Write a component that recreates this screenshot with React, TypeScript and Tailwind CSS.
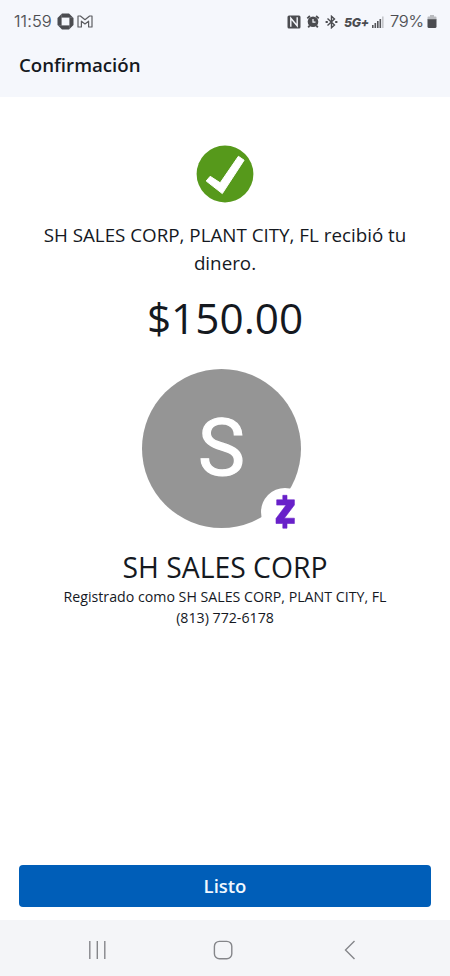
function StatusBar() {
  return (
    <div className="flex h-[43px] items-center justify-between pl-[14px] pr-[13px] text-[#4b4c50] font-['Inter','Roboto',sans-serif]">
      <div className="flex items-center">
        <span className="w-[38px] whitespace-nowrap text-[16.5px] font-light leading-none tracking-[0.1px] [-webkit-text-stroke:0.15px_#4b4c50]">11:59</span>
        <svg className="ml-[5px]" width="17" height="17" viewBox="0 0 17 17" fill="none">
          <path d="M5 0.5H12L16.5 5V12L12 16.5H5L0.5 12V5Z" fill="#4b4c50" />
          <rect x="4.6" y="4.6" width="7.8" height="7.8" fill="#f5f7fc" />
          <path d="M4.6 4.8V1M12.2 4.6H16M12.4 12.2V16M4.8 12.4H1" stroke="#85878c" strokeWidth="0.5" />
        </svg>
        <svg className="ml-[3px]" width="16" height="13" viewBox="0 0 16 13" fill="none" stroke="#5c5d61" strokeWidth="1.2" strokeLinejoin="round">
          <path d="M1 1H3.4L8 4.7L12.6 1H15V12H11.6V6.2L8 9L4.4 6.2V12H1Z" />
        </svg>
      </div>
      <div className="flex items-center">
        <svg className="ml-px" width="14" height="14" viewBox="0 0 14 14" fill="none">
          <rect x="0.5" y="0.5" width="13" height="13" rx="1.5" fill="#4b4c50" />
          <path d="M3.8 11.8V3.2L10.2 10.8V2.2" stroke="#f5f7fc" strokeWidth="1.4" />
        </svg>
        <svg className="ml-[5px]" width="14" height="13" viewBox="0 0 13 13" fill="none">
          <circle cx="6.5" cy="6.8" r="5.3" fill="#4b4c50" />
          <path d="M.8 3.4L3.4 1M12.2 3.4L9.6 1M3.2 10.5L1.7 12.4M9.8 10.5L11.3 12.4" stroke="#4b4c50" strokeWidth="1.8" />
          <path d="M6.5 4V7.2H9" stroke="#f5f7fc" strokeWidth="1.2" />
        </svg>
        <svg className="ml-[5px]" width="13" height="14" viewBox="0 0 13 14" fill="none" stroke="#4b4c50" strokeWidth="1.4">
          <path d="M2.5 3.5L9.5 10L6.5 12.7V1.3L9.5 4L2.5 10.5" />
          <path d="M0.6 7H2.8M10.2 7H12.4" strokeWidth="1.8" />
        </svg>
        <span className="ml-[6px] mt-[3px] w-[25px] whitespace-nowrap text-[12.3px] font-extrabold italic leading-none tracking-[-0.3px]">5G+</span>
        <svg className="ml-[3px]" width="12" height="12" viewBox="0 0 12 12" fill="#55565a">
          <rect x="0" y="9" width="1.6" height="3" />
          <rect x="2.5" y="7" width="1.6" height="5" />
          <rect x="5" y="5" width="1.6" height="7" />
          <rect x="7.5" y="3" width="1.6" height="9" />
          <rect x="10" y="0.5" width="1.6" height="11.5" fill="#c4c6ca" />
        </svg>
        <span className="ml-[6px] w-[34px] whitespace-nowrap text-[16.5px] font-light leading-none tracking-[-0.2px] [-webkit-text-stroke:0.15px_#4b4c50]">79%</span>
        <svg className="ml-[3px]" width="10" height="13" viewBox="0 0 10 13">
          <path d="M3 0H7V1.5H8.5Q9.5 1.5 9.5 2.5V5H.5V2.5Q.5 1.5 1.5 1.5H3Z" fill="#b9bbbf" />
          <path d="M.5 4.2H9.5V11.5Q9.5 13 8 13H2Q.5 13 .5 11.5Z" fill="#4b4c50" />
        </svg>
      </div>
    </div>
  );
}

function SuccessIcon() {
  return (
    <svg className="mt-[48px] shrink-0" width="58" height="58" viewBox="0 0 58 58">
      <circle cx="29" cy="29" r="28.4" fill="#56991b" />
      <path d="M10.2 36L14.2 31.3L24.2 37.8L42.4 11.3L48.1 15.2L26.3 48.6Z" fill="#fff" stroke="#fff" strokeWidth="1" strokeLinejoin="round" />
    </svg>
  );
}

function Avatar() {
  return (
    <div className="relative mr-[8px] mt-[23px] flex h-[159px] w-[159px] shrink-0 items-center justify-center rounded-full bg-[#959595]">
      <span className="ml-[1px] font-['Roboto',sans-serif] text-[79px] leading-none text-white [-webkit-text-stroke:1.2px_white]">S</span>
      <svg className="absolute left-[119px] top-[119px]" width="48" height="48" viewBox="0 0 48 48">
        <circle cx="24" cy="24" r="24" fill="#fff" />
        <path
          d="M21.8 7.3H26V11.8H33.4V17L23.4 30.2H33.4V35.5H26V40.2H21.8V35.5H15V30.5L25 17.1H15.7V11.8H21.8Z"
          fill="#6820c9"
          stroke="#6820c9"
          strokeWidth="0.6"
          strokeLinejoin="round"
        />
      </svg>
    </div>
  );
}

function NavigationBar() {
  return (
    <nav className="flex h-[56px] items-center bg-[#f4f5f8] pl-[87px] pt-[4px]">
      <svg width="20" height="20" viewBox="0 0 20 20" stroke="#85868a" strokeWidth="1.4">
        <path d="M2.8 1V19M10.3 1V19M17.8 1V19" />
      </svg>
      <svg className="ml-[106px]" width="20" height="20" viewBox="0 0 20 20" fill="none" stroke="#85868a" strokeWidth="1.4">
        <rect x="1.4" y="1.4" width="17.4" height="17.4" rx="5" />
      </svg>
      <svg className="ml-[111px]" width="12" height="20" viewBox="0 0 12 20" fill="none" stroke="#85868a" strokeWidth="1.4">
        <path d="M10.5 1L1.5 10L10.5 19" />
      </svg>
    </nav>
  );
}

export default function App() {
  return (
    <div className="flex h-[976px] w-[450px] flex-col overflow-hidden bg-white font-['Open_Sans',sans-serif] text-[#15191f]">
      <header className="h-[97px] shrink-0 bg-[#f5f7fc]">
        <StatusBar />
        <h1 className="pl-[19px] pt-[9px] text-[18.7px] font-semibold leading-[26px]">Confirmación</h1>
      </header>
      <main className="flex flex-1 flex-col items-center text-center">
        <SuccessIcon />
        <p className="mt-[18px] text-[18.8px] leading-[28px]">
          SH SALES CORP, PLANT CITY, FL recibió tu
          <br />
          dinero.
        </p>
        <p className="mt-[13px] text-[42.3px] leading-[56px]">$150.00</p>
        <Avatar />
        <h2 className="mt-[19px] text-[28.3px] leading-[40px]">SH SALES CORP</h2>
        <p className="-mt-px text-[14.2px] leading-[21px]">
          Registrado como SH SALES CORP, PLANT CITY, FL
          <br />
          (813) 772-6178
        </p>
      </main>
      <div className="px-[19px] pb-[13px]">
        <button className="flex h-[42px] w-full items-center justify-center rounded-[4px] bg-[#005eb8] text-[18.5px] font-semibold text-[#f1f8ff]">
          Listo
        </button>
      </div>
      <NavigationBar />
    </div>
  );
}
